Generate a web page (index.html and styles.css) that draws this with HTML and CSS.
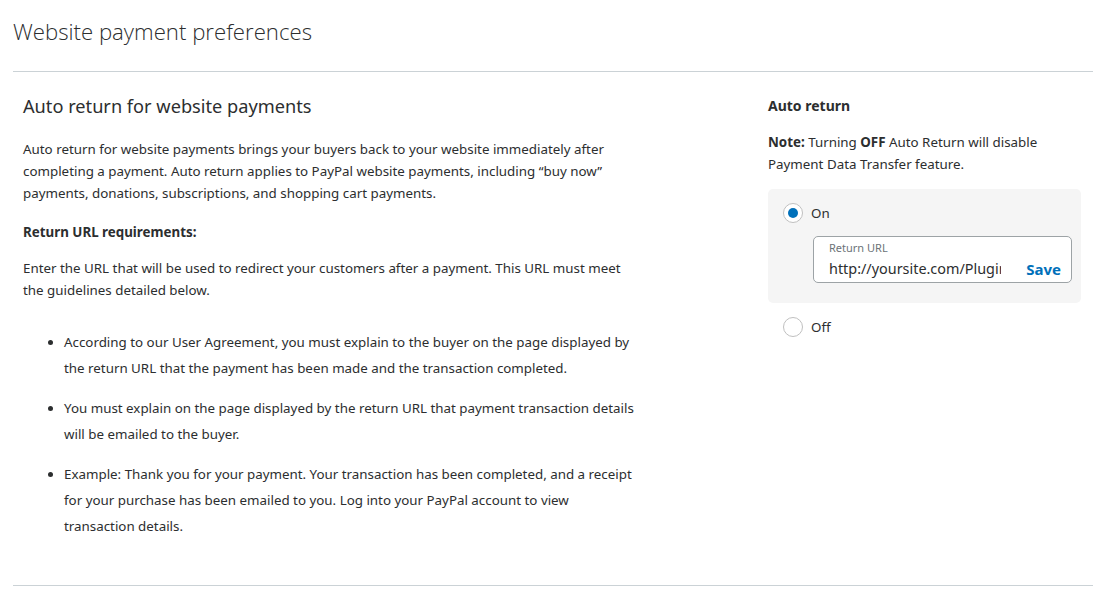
FILE: index.html
```html
<!DOCTYPE html>
<html lang="en">
<head>
<meta charset="utf-8">
<title>Website payment preferences</title>
<link rel="stylesheet" href="styles.css">
</head>
<body>
<div class="page">
  <header class="page-header">
    <h1 class="page-title">Website payment preferences</h1>
  </header>
  <section class="section">
    <div class="main-col">
      <h2 class="section-title">Auto return for website payments</h2>
      <p class="text intro">Auto return for website payments brings your buyers back to your website immediately after completing a payment. Auto return applies to PayPal website payments, including “buy now” payments, donations, subscriptions, and shopping cart payments.</p>
      <p class="text strong-line">Return URL requirements:</p>
      <p class="text">Enter the URL that will be used to redirect your customers after a payment. This URL must meet the guidelines detailed below.</p>
      <ul class="rules">
        <li>According to our User Agreement, you must explain to the buyer on the page displayed by the return URL that the payment has been made and the transaction completed.</li>
        <li>You must explain on the page displayed by the return URL that payment transaction details will be emailed to the buyer.</li>
        <li>Example: Thank you for your payment. Your transaction has been completed, and a receipt for your purchase has been emailed to you. Log into your PayPal account to view transaction details.</li>
      </ul>
    </div>
    <aside class="side-col">
      <h3 class="side-title">Auto return</h3>
      <p class="text note"><span class="em">Note:</span> Turning <span class="em">OFF</span> Auto Return will disable Payment Data Transfer feature.</p>
      <div class="option-box">
        <label class="radio-row">
          <span class="radio checked"></span>
          <span class="radio-label">On</span>
        </label>
        <div class="url-field">
          <div class="url-input">
            <span class="url-label">Return URL</span>
            <span class="url-value">http://yoursite.com/Plugin</span>
          </div>
          <span class="save">Save</span>
        </div>
      </div>
      <label class="radio-row off-row">
        <span class="radio"></span>
        <span class="radio-label">Off</span>
      </label>
    </aside>
  </section>
</div>
</body>
</html>
```

FILE: styles.css
```css
* { box-sizing: border-box; }
html, body { margin: 0; padding: 0; background: #fff; }
body {
  font-family: "Noto Sans", "Open Sans", sans-serif;
  color: #2c2e2f;
  font-size: 14px;
}
.page { padding: 0 13px; }
.page-header {
  height: 72px;
  border-bottom: 1px solid #cbd2d6;
  padding-top: 16px;
}
.page-title {
  margin: 0;
  font-family: "Open Sans", sans-serif;
  font-weight: 300;
  font-size: 22.2px;
  line-height: 32px;
  color: #2c2e2f;
}
.section {
  display: flex;
  border-bottom: 1px solid #cbd2d6;
  padding: 20px 0 40px 10px;
  height: 514px;
}
.main-col { width: 617px; }
.side-col { margin-left: 128px; width: 313px; }
.section-title {
  margin: 0;
  font-weight: 400;
  font-size: 18.2px;
  line-height: 28px;
}
.text {
  margin: 0;
  font-size: 13.35px;
  line-height: 22px;
}
.intro { margin-top: 18px; }
.strong-line { font-weight: 700; margin-top: 17px; }
.strong-line + .text { margin-top: 14px; }
.rules {
  margin: 28px 0 0;
  padding-left: 41px;
  font-size: 13.35px;
  line-height: 26px;
}
.rules li { margin-bottom: 14px; }
.side-title {
  margin: 0;
  font-size: 14px;
  font-weight: 700;
  line-height: 28px;
}
.note { margin-top: 11px; }
.em { font-weight: 700; }
.option-box {
  margin-top: 14px;
  background: #f5f5f5;
  border-radius: 5px;
  padding: 13px 9px 20px 15px;
}
.radio-row {
  display: flex;
  align-items: center;
  gap: 8px;
  height: 22px;
}
.radio {
  width: 20px;
  height: 20px;
  border-radius: 50%;
  border: 1px solid #c0c0c0;
  background: #fff;
  position: relative;
  flex: none;
}
.radio.checked::after {
  content: "";
  position: absolute;
  left: 4px;
  top: 4px;
  width: 10px;
  height: 10px;
  border-radius: 50%;
  background: #0070ba;
}
.radio-label { font-size: 13.35px; }
.url-field {
  margin: 12px 0 0 30px;
  height: 47px;
  border: 1px solid #9da3a6;
  border-radius: 5px;
  background: #fff;
  display: flex;
  align-items: flex-end;
  padding: 0 10px 2px 15px;
}
.url-input {
  display: flex;
  flex-direction: column;
  width: 172px;
  overflow: hidden;
  white-space: nowrap;
  align-self: stretch;
  padding-top: 4px;
}
.url-label { font-size: 11px; line-height: 14px; color: #6c7378; }
.url-value { font-size: 14.4px; line-height: 22px; margin-top: 3px; color: #2c2e2f; }
.save {
  margin-left: auto;
  color: #0070ba;
  font-weight: 700;
  font-size: 15px;
  line-height: 22px;
}
.off-row { margin-top: 13px; padding-left: 15px; }
```
